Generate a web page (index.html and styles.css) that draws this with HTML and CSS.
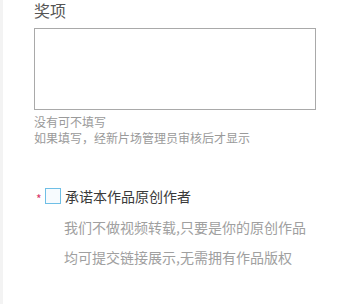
FILE: index.html
```html
<!DOCTYPE html>
<html lang="zh">
<head>
<meta charset="utf-8">
<link rel="stylesheet" href="styles.css">
</head>
<body>
<div class="page">
  <div class="form">
    <div class="title">奖项</div>
    <textarea class="box"></textarea>
    <div class="help">
      <div>没有可不填写</div>
      <div>如果填写，经新片场管理员审核后才显示</div>
    </div>
    <div class="agree">
      <span class="star">*</span>
      <span class="check"></span>
      <span class="label">承诺本作品原创作者</span>
    </div>
    <div class="desc">
      <div>我们不做视频转载,只要是你的原创作品</div>
      <div>均可提交链接展示,无需拥有作品版权</div>
    </div>
  </div>
</div>
</body>
</html>
```
FILE: styles.css
```css
html, body {
  margin: 0;
  padding: 0;
  background: #fff;
}
.page {
  display: flex;
  min-height: 304px;
  border-left: 3px solid #f3f3f3;
  font-family: "Noto Sans CJK SC", "Noto Sans", sans-serif;
}
.form {
  padding-left: 31px;
  display: flex;
  flex-direction: column;
  align-items: flex-start;
}
.title {
  margin-top: 1px;
  font-size: 16px;
  line-height: 18px;
  color: #555;
}
.box {
  margin: 9px 0 0 0;
  width: 282px;
  height: 82px;
  box-sizing: border-box;
  border: 1px solid #a9a9a9;
  resize: none;
  padding: 0;
  background: #fff;
}
.help {
  margin-top: 4px;
  font-size: 12px;
  line-height: 16px;
  color: #9a9a9a;
}
.agree {
  margin-top: 40px;
  display: flex;
  align-items: center;
  height: 20px;
}
.star {
  color: #d9366a;
  font-size: 12px;
  width: 11px;
  padding-left: 2px;
  padding-top: 5px;
  box-sizing: border-box;
  line-height: 20px;
}
.check {
  width: 16px;
  height: 16px;
  box-sizing: border-box;
  border: 1px solid #6fbfe6;
  background: #f7fbfe;
  margin-right: 4px;
}
.label {
  font-size: 14px;
  color: #3a3a3a;
  line-height: 20px;
}
.desc {
  margin-top: 6px;
  padding-left: 30px;
  font-size: 14px;
  line-height: 30px;
  color: #a0a0a0;
}
```
